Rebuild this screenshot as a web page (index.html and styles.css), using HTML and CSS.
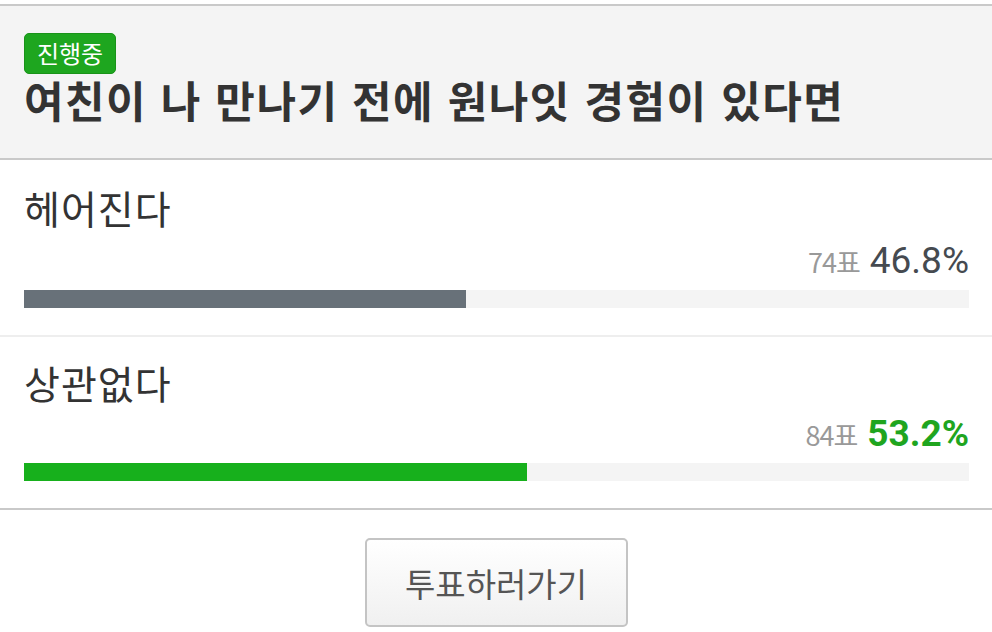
FILE: index.html
```html
<!DOCTYPE html>
<html lang="ko">
<head>
    <meta charset="UTF-8">
    <meta name="viewport" content="width=device-width, initial-scale=1.0">
    <title>투표</title>
    <link rel="stylesheet" href="styles.css">
</head>
<body>
    <div class="poll">
        <div class="poll-head">
            <span class="badge">진행중</span>
            <h1 class="poll-title">여친이 나 만나기 전에 원나잇 경험이 있다면</h1>
        </div>

        <ul class="options">
            <li class="option">
                <div class="option-label">헤어진다</div>
                <div class="option-result">
                    <span class="count">74표</span><span class="pct">46.8%</span>
                </div>
                <div class="bar"><div class="bar-fill" style="width: 46.8%"></div></div>
            </li>
            <li class="option option-top">
                <div class="option-label">상관없다</div>
                <div class="option-result">
                    <span class="count">84표</span><span class="pct">53.2%</span>
                </div>
                <div class="bar"><div class="bar-fill" style="width: 53.2%"></div></div>
            </li>
        </ul>

        <div class="actions">
            <button class="vote-btn" type="button">투표하러가기</button>
        </div>
    </div>
</body>
</html>
```

FILE: styles.css
```css
body {
    margin: 0;
    padding-top: 4px;
    background: #fff;
    font-family: "Noto Sans CJK KR", "Noto Sans", sans-serif;
    color: #333;
}
.poll-head {
    background-color: #f4f4f4;
    border-top: 2px solid #c9c9c9;
    border-bottom: 2px solid #c9c9c9;
    padding: 27px 24px 35px;
}
.badge {
    display: inline-block;
    box-sizing: border-box;
    width: 92px;
    height: 41px;
    padding-bottom: 2px;
    line-height: 37px;
    text-align: center;
    background-color: #1ea61f;
    border: 1px solid #199319;
    border-radius: 5px;
    color: #fff;
    font-size: 24px;
    vertical-align: top;
}
.poll-title {
    margin: 1px 0 0;
    height: 48px;
    font-size: 43px;
    line-height: 48px;
    font-weight: bold;
    letter-spacing: 1.5px;
    color: #333;
}
.options {
    list-style: none;
    margin: 0;
    padding: 0;
}
.option {
    padding: 22px 23px 27px 24px;
    border-bottom: 2px solid #eeeeee;
}
.option:first-child {
    padding-top: 24px;
}
.option:last-child {
    border-bottom: 2px solid #c9c9c9;
}
.option-label {
    height: 46px;
    font-size: 39px;
    line-height: 46px;
    letter-spacing: 1px;
    color: #333;
}
.option-result {
    display: flex;
    justify-content: flex-end;
    align-items: baseline;
    height: 40px;
    margin-top: 9px;
    line-height: 40px;
}
.option:first-child .option-result {
    margin-top: 11px;
}
.count {
    font-size: 27px;
    color: #999;
    letter-spacing: -1px;
    margin-right: 10px;
}
.pct {
    font-family: Roboto, "Liberation Sans", sans-serif;
    font-size: 37px;
    color: #454a50;
}
.option-top .pct {
    color: #1fa51f;
    font-weight: bold;
}
.bar {
    margin-top: 9px;
    height: 18px;
    background-color: #f4f4f4;
}
.bar-fill {
    height: 100%;
    background-color: #687179;
}
.option-top .bar-fill {
    background-color: #17b01c;
}
.actions {
    padding-top: 28px;
    text-align: center;
}
.vote-btn {
    width: 263px;
    height: 89px;
    border: 2px solid #c4c4c4;
    border-radius: 5px;
    background: linear-gradient(#ffffff, #f0f0f0);
    font-family: "Noto Sans CJK KR", "Noto Sans", sans-serif;
    font-size: 33px;
    color: #555;
    cursor: pointer;
}
```
